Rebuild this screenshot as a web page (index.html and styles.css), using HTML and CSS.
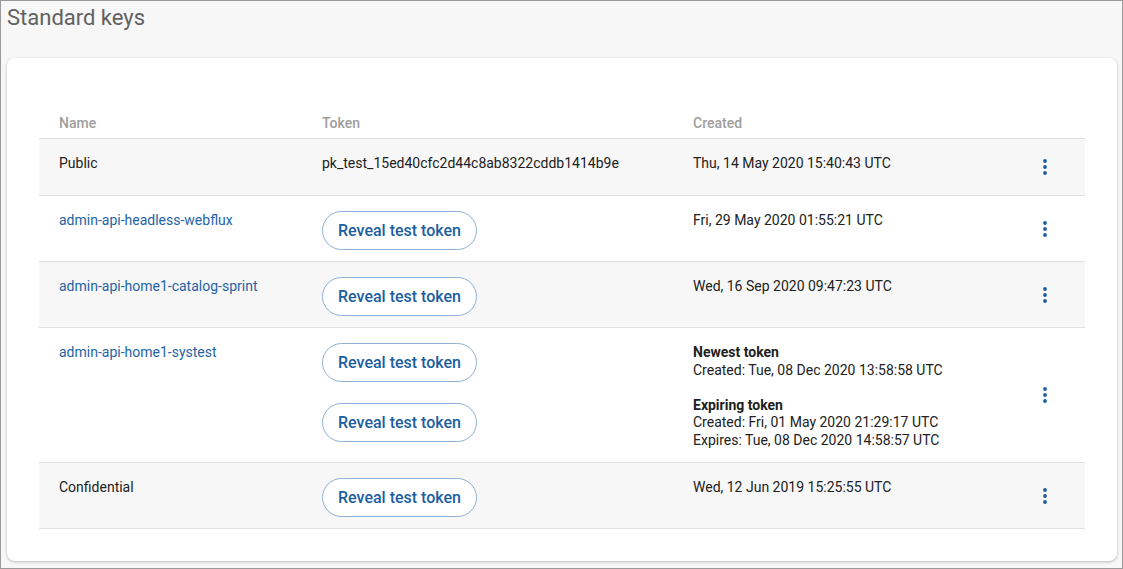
FILE: index.html
```html
<!DOCTYPE html>
<html>
<head>
<meta charset="utf-8">
<link rel="stylesheet" href="styles.css">
</head>
<body>
<div class="page">
  <h1 class="title">Standard keys</h1>
  <div class="card">
    <table class="keys">
      <colgroup>
        <col class="c-name"><col class="c-token"><col class="c-created"><col class="c-actions">
      </colgroup>
      <thead>
        <tr><th>Name</th><th>Token</th><th>Created</th><th></th></tr>
      </thead>
      <tbody>
        <tr class="shaded">
          <td>Public</td>
          <td>pk_test_15ed40cfc2d44c8ab8322cddb1414b9e</td>
          <td>Thu, 14 May 2020 15:40:43 UTC</td>
          <td class="actions"><button class="more"><svg width="4" height="16" viewBox="0 0 4 16"><circle cx="2" cy="2" r="1.9"/><circle cx="2" cy="8" r="1.9"/><circle cx="2" cy="14" r="1.9"/></svg></button></td>
        </tr>
        <tr>
          <td><a class="link" href="#">admin-api-headless-webflux</a></td>
          <td><button class="reveal">Reveal test token</button></td>
          <td>Fri, 29 May 2020 01:55:21 UTC</td>
          <td class="actions"><button class="more"><svg width="4" height="16" viewBox="0 0 4 16"><circle cx="2" cy="2" r="1.9"/><circle cx="2" cy="8" r="1.9"/><circle cx="2" cy="14" r="1.9"/></svg></button></td>
        </tr>
        <tr class="shaded">
          <td><a class="link" href="#">admin-api-home1-catalog-sprint</a></td>
          <td><button class="reveal">Reveal test token</button></td>
          <td>Wed, 16 Sep 2020 09:47:23 UTC</td>
          <td class="actions"><button class="more"><svg width="4" height="16" viewBox="0 0 4 16"><circle cx="2" cy="2" r="1.9"/><circle cx="2" cy="8" r="1.9"/><circle cx="2" cy="14" r="1.9"/></svg></button></td>
        </tr>
        <tr>
          <td><a class="link" href="#">admin-api-home1-systest</a></td>
          <td>
            <div class="btn-stack">
              <button class="reveal">Reveal test token</button>
              <button class="reveal">Reveal test token</button>
            </div>
          </td>
          <td>
            <div class="details">
              <div class="group">
                <div class="strong">Newest token</div>
                <div>Created: Tue, 08 Dec 2020 13:58:58 UTC</div>
              </div>
              <div class="group">
                <div class="strong">Expiring token</div>
                <div>Created: Fri, 01 May 2020 21:29:17 UTC</div>
                <div>Expires: Tue, 08 Dec 2020 14:58:57 UTC</div>
              </div>
            </div>
          </td>
          <td class="actions"><button class="more"><svg width="4" height="16" viewBox="0 0 4 16"><circle cx="2" cy="2" r="1.9"/><circle cx="2" cy="8" r="1.9"/><circle cx="2" cy="14" r="1.9"/></svg></button></td>
        </tr>
        <tr class="shaded">
          <td>Confidential</td>
          <td><button class="reveal">Reveal test token</button></td>
          <td>Wed, 12 Jun 2019 15:25:55 UTC</td>
          <td class="actions"><button class="more"><svg width="4" height="16" viewBox="0 0 4 16"><circle cx="2" cy="2" r="1.9"/><circle cx="2" cy="8" r="1.9"/><circle cx="2" cy="14" r="1.9"/></svg></button></td>
        </tr>
      </tbody>
    </table>
  </div>
</div>
</body>
</html>
```
FILE: styles.css
```css
html, body {
  margin: 0;
  padding: 0;
}
body {
  font-family: Roboto, "Liberation Sans", Arial, sans-serif;
  color: #212121;
}
.page {
  box-sizing: border-box;
  width: 1123px;
  height: 569px;
  border: 1px solid #9a9a9a;
  background: #f7f7f7;
  padding: 5px 5px 0 6px;
  overflow: hidden;
}
.title {
  margin: 0 0 28px 0;
  font-size: 22px;
  line-height: 24px;
  font-weight: 400;
  color: #616161;
}
.card {
  background: #fff;
  border-radius: 8px;
  box-shadow: 0 1px 3px rgba(0,0,0,0.25);
  padding: 40px 32px 32px;
}
.keys {
  width: 100%;
  border-collapse: collapse;
  table-layout: fixed;
  font-size: 14px;
}
.c-name { width: 263px; }
.c-token { width: 371px; }
.c-created { width: 332px; }
.c-actions { width: 80px; }
.keys th {
  text-align: left;
  font-weight: 500;
  color: #9e9e9e;
  padding: 17px 20px 7px;
  line-height: 16px;
  border-bottom: 1px solid #e0e0e0;
}
.keys td {
  padding: 16px 20px 9px;
  line-height: 16px;
  vertical-align: top;
  border-bottom: 1px solid #e0e0e0;
}
.keys tr.shaded td {
  background: #f7f7f7;
}
.keys td.actions {
  vertical-align: middle;
  padding: 8px 20px 8px 0;
  text-align: right;
}
.more {
  width: 40px;
  height: 40px;
  border: 0;
  background: transparent;
  padding: 0;
  display: inline-flex;
  align-items: center;
  justify-content: center;
  fill: #1b5e9e;
  vertical-align: middle;
}
.link {
  color: #2563a6;
  text-decoration: none;
}
.reveal {
  box-sizing: border-box;
  height: 39px;
  margin: -1px 0 2px;
  padding: 0 15px;
  border: 1px solid #8fb1d4;
  border-radius: 20px;
  background: #fff;
  color: #1c5ea1;
  font-family: Roboto, "Liberation Sans", Arial, sans-serif;
  font-size: 16px;
  font-weight: 500;
  display: block;
}
.btn-stack {
  display: flex;
  flex-direction: column;
  align-items: flex-start;
  gap: 22px;
}
.btn-stack .reveal {
  margin: -1px 0 0;
}
.details {
  line-height: 17.5px;
  display: flex;
  flex-direction: column;
  gap: 17.5px;
  padding-bottom: 4px;
}
.strong {
  font-weight: 700;
}
```
